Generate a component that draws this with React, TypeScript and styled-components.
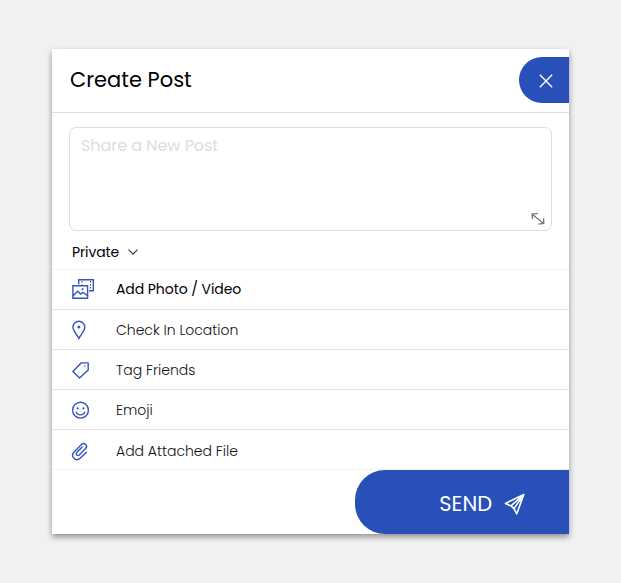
import React from 'react';
import styled, { createGlobalStyle } from 'styled-components';

const BLUE = '#2850b8';

const GlobalStyle = createGlobalStyle`
  * { box-sizing: border-box; }
  body {
    margin: 0;
    background: #f1f1f1;
    font-family: Poppins, Inter, 'Open Sans', sans-serif;
    font-feature-settings: 'cv11' 1;
    color: #000;
  }
  button, textarea { font: inherit; font-feature-settings: inherit; }
`;

const Page = styled.main`
  min-height: 583px;
  padding: 49px 52px;
`;

const Card = styled.section`
  width: 517px;
  height: 485px;
  display: flex;
  flex-direction: column;
  background: #fff;
  box-shadow: 0 3px 6px rgba(0, 0, 0, 0.4);
`;

const Header = styled.header`
  height: 64px;
  flex: none;
  display: flex;
  justify-content: space-between;
  align-items: flex-start;
  padding: 8px 0 0 18px;
  border-bottom: 1px solid #e0e0e0;
`;

const Title = styled.h1`
  margin: 0;
  font-size: 21px;
  font-weight: 400;
  line-height: 46px;
`;

const CloseButton = styled.button`
  width: 50px;
  height: 46px;
  padding: 2px 0 0 4px;
  display: flex;
  align-items: center;
  justify-content: center;
  border: 0;
  border-radius: 23px 0 0 23px;
  background: ${BLUE};
`;

const Composer = styled.div`
  height: 104px;
  flex: none;
  margin: 14px 17px 0;
  display: flex;
  padding: 6px 6px 5px 11px;
  border: 1px solid #dedede;
  border-radius: 7px;
`;

const Input = styled.textarea`
  flex: 1;
  min-width: 0;
  padding: 0;
  border: 0;
  outline: 0;
  resize: none;
  background: transparent;
  font-size: 16px;
  line-height: 24px;
  letter-spacing: -0.05px;
  &::placeholder { color: #dddddd; opacity: 1; }
`;

const ResizeIcon = styled.svg`
  flex: none;
  align-self: flex-end;
`;

const Privacy = styled.button`
  height: 38px;
  flex: none;
  display: flex;
  align-items: center;
  gap: 9px;
  padding: 4px 0 0 20px;
  border: 0;
  background: none;
  font-size: 14px;
  line-height: 20px;
  letter-spacing: -0.12px;
`;

const Options = styled.ul`
  margin: 0;
  padding: 0;
  list-style: none;
  border-top: 1px solid #f2f2f2;
`;

const Option = styled.li<{ $strong?: boolean }>`
  height: 40px;
  display: grid;
  grid-template-columns: 44px 1fr;
  align-items: center;
  padding-left: 20px;
  border-bottom: 1px solid #e4e4e4;
  font-size: 14px;
  font-weight: ${p => (p.$strong ? 400 : 300)};
  color: ${p => (p.$strong ? '#000' : '#111')};
  letter-spacing: ${p => (p.$strong ? '-0.07px' : '0')};
  svg { display: block; overflow: visible; }
  span { padding-top: ${p => (p.$strong ? 0 : 2)}px; }
  &:last-child {
    border-bottom-color: #f2f2f2;
    svg { margin-top: 3px; }
    span { padding-top: 4px; }
  }
`;

const Footer = styled.footer`
  height: 64px;
  flex: none;
  display: flex;
  justify-content: flex-end;
`;

const SendButton = styled.button`
  width: 214px;
  height: 64px;
  display: flex;
  align-items: center;
  justify-content: flex-end;
  gap: 12px;
  padding: 4px 44px 0 0;
  border: 0;
  border-radius: 30px 0 0 30px;
  background: ${BLUE};
  color: #fff;
  font-size: 21px;
  line-height: 30px;
`;

const line = {
  fill: 'none',
  stroke: '#3455b9',
  strokeWidth: 1.4,
} as const;

const PhotoIcon = () => (
  <svg width="23" height="23" viewBox="0 0 23 23" {...line}>
    <path d="M6.7 6.2V1.7H21.3V12.8H17" />
    <path d="M10 3v3.4M18.5 3v9" strokeWidth="1.2" strokeDasharray="1.5 1.5" />
    <path d="M.9 7.7H15.6V20.3H.9zM1.2 17.7 5.7 13.2 8.7 16.1 11 14.3 15.3 17.5" />
    <circle cx="10.5" cy="11.2" r="1" fill="#3455b9" stroke="none" />
  </svg>
);

const PinIcon = () => (
  <svg width="14" height="20" viewBox="0 0 14 20" {...line}>
    <path d="M6.9 18.4C5.4 15.2 1 10.9 1 7.2a5.9 5.9 0 0 1 11.8 0C12.8 10.9 8.3 15.2 6.9 18.4z" />
    <circle cx="6.9" cy="6.9" r="1.5" fill="#3455b9" stroke="none" />
  </svg>
);

const TagIcon = () => (
  <svg width="18" height="17" viewBox="0 0 18 17" {...line}>
    <path d="M9.1 1.9H16.2V8.9L7.6 17 .9 10.4z" strokeLinejoin="round" />
    <circle cx="12.9" cy="5" r=".8" fill="#3455b9" stroke="none" />
  </svg>
);

const SmileIcon = () => (
  <svg width="18" height="18" viewBox="0 0 18 18" {...line}>
    <circle cx="8.5" cy="9.2" r="7.9" />
    <path d="M4.1 10.6C5.2 15 11.8 15 12.9 10.6" />
    <g fill="#3455b9" stroke="none">
      <circle cx="5.6" cy="7.3" r="1.1" />
      <circle cx="11.4" cy="7.3" r="1.1" />
    </g>
  </svg>
);

const ClipIcon = () => (
  <svg width="18" height="19" viewBox="0 0 18 19" {...line} strokeLinecap="round">
    <path d="M14.4 10.2 8.1 16.3C3.9 20-1.8 14.3 1.8 10.2L9.5 2.5C12.3-.3 16.4 3.8 13.6 6.6L7.3 13C5.5 14.6 3.1 12.4 4.7 10.6L10.2 5.1" />
  </svg>
);

const options = [
  { label: 'Add Photo / Video', icon: <PhotoIcon />, strong: true },
  { label: 'Check In Location', icon: <PinIcon /> },
  { label: 'Tag Friends', icon: <TagIcon /> },
  { label: 'Emoji', icon: <SmileIcon /> },
  { label: 'Add Attached File', icon: <ClipIcon /> },
];

export default function App() {
  return (
    <Page>
      <GlobalStyle />
      <Card>
        <Header>
          <Title>Create Post</Title>
          <CloseButton aria-label="Close">
            <svg width="14" height="14" viewBox="0 0 14 14" fill="none" stroke="#fff" strokeWidth="1.4">
              <path d="M.8.8 13.2 13.2M13.2.8.8 13.2" />
            </svg>
          </CloseButton>
        </Header>
        <Composer>
          <Input placeholder="Share a New Post" />
          <ResizeIcon width="14" height="12" viewBox="0 0 14 12" fill="none" stroke="#777" strokeWidth="1.3">
            <path d="M1.2 1.2 12.6 10.4M6.8.6 1 1 1.6 6M12.6 5.2 12.8 10.5 7.4 11.2" />
          </ResizeIcon>
        </Composer>
        <Privacy>
          Private
          <svg width="10" height="6" viewBox="0 0 10 6" fill="none" stroke="#333" strokeWidth="1.1">
            <path d="M.5.6 5 5.2 9.5.6" />
          </svg>
        </Privacy>
        <Options>
          {options.map(o => (
            <Option key={o.label} $strong={o.strong}>
              {o.icon}
              <span>{o.label}</span>
            </Option>
          ))}
        </Options>
        <Footer>
          <SendButton>
            SEND
            <svg width="21" height="22" viewBox="0 0 21 22" fill="none" stroke="#fff" strokeWidth="1.6" strokeLinejoin="round">
              <path d="M19.8 1.5 1.4 10.5 7 12.9 10 15.6 12.7 20.9zM19.8 1.5 7 12.9M19.8 1.5 10 15.6" />
            </svg>
          </SendButton>
        </Footer>
      </Card>
    </Page>
  );
}
